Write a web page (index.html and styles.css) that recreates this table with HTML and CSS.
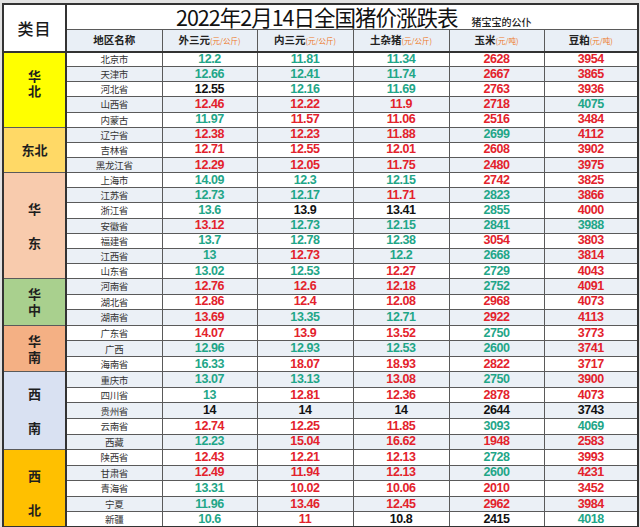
FILE: index.html
```html
<!DOCTYPE html>
<html lang="zh">
<head>
<meta charset="utf-8">
<title>2022年2月14日全国猪价涨跌表</title>
<link rel="stylesheet" href="styles.css">
</head>
<body>
<table class="sheet">
<colgroup>
<col class="c-cat"><col class="c-name"><col class="c-d1"><col class="c-d2"><col class="c-d3"><col class="c-d4"><col class="c-d5">
</colgroup>
<tbody>
<tr class="title-row">
<td class="cat-head" rowspan="2">类目</td>
<td class="title-cell" colspan="6"><div class="title-wrap"><span class="title">2022年2月14日全国猪价涨跌表</span><span class="sub">猪宝宝的公仆</span></div></td>
</tr>
<tr class="head-row">
<th>地区名称</th>
<th>外三元<span class="unit">(元/公斤)</span></th>
<th>内三元<span class="unit">(元/公斤)</span></th>
<th>土杂猪<span class="unit">(元/公斤)</span></th>
<th>玉米<span class="unit">(元/吨)</span></th>
<th>豆粕<span class="unit">(元/吨)</span></th>
</tr>

<tr><td class="cat huabei" rowspan="5"><div class="lbl lbl-up">华<br>北</div></td><td class="nm">北京市</td><td class="g">12.2</td><td class="g">11.81</td><td class="g">11.34</td><td class="r">2628</td><td class="r">3954</td></tr>
<tr class="ev"><td class="nm">天津市</td><td class="g">12.66</td><td class="g">12.41</td><td class="g">11.74</td><td class="r">2667</td><td class="r">3865</td></tr>
<tr><td class="nm">河北省</td><td class="k">12.55</td><td class="g">12.16</td><td class="g">11.69</td><td class="r">2763</td><td class="r">3936</td></tr>
<tr class="ev"><td class="nm">山西省</td><td class="r">12.46</td><td class="r">12.22</td><td class="r">11.9</td><td class="r">2718</td><td class="g">4075</td></tr>
<tr><td class="nm">内蒙古</td><td class="g">11.97</td><td class="r">11.57</td><td class="r">11.06</td><td class="r">2516</td><td class="r">3484</td></tr>

<tr class="ev"><td class="cat dongbei" rowspan="3"><div class="lbl">东北</div></td><td class="nm">辽宁省</td><td class="r">12.38</td><td class="r">12.23</td><td class="r">11.88</td><td class="g">2699</td><td class="r">4112</td></tr>
<tr><td class="nm">吉林省</td><td class="r">12.71</td><td class="r">12.55</td><td class="r">12.01</td><td class="r">2608</td><td class="r">3902</td></tr>
<tr class="ev"><td class="nm">黑龙江省</td><td class="r">12.29</td><td class="r">12.05</td><td class="r">11.75</td><td class="r">2480</td><td class="r">3975</td></tr>

<tr><td class="cat huadong" rowspan="7"><div class="lbl lbl-wide">华<br><br>东</div></td><td class="nm">上海市</td><td class="g">14.09</td><td class="g">12.3</td><td class="g">12.15</td><td class="r">2742</td><td class="r">3825</td></tr>
<tr class="ev"><td class="nm">江苏省</td><td class="g">12.73</td><td class="g">12.17</td><td class="r">11.71</td><td class="g">2823</td><td class="r">3866</td></tr>
<tr><td class="nm">浙江省</td><td class="g">13.6</td><td class="k">13.9</td><td class="k">13.41</td><td class="g">2855</td><td class="r">4000</td></tr>
<tr class="ev"><td class="nm">安徽省</td><td class="r">13.12</td><td class="g">12.73</td><td class="g">12.15</td><td class="g">2841</td><td class="g">3988</td></tr>
<tr><td class="nm">福建省</td><td class="g">13.7</td><td class="g">12.78</td><td class="g">12.38</td><td class="r">3054</td><td class="r">3803</td></tr>
<tr class="ev"><td class="nm">江西省</td><td class="g">13</td><td class="r">12.73</td><td class="g">12.2</td><td class="g">2668</td><td class="r">3814</td></tr>
<tr><td class="nm">山东省</td><td class="g">13.02</td><td class="g">12.53</td><td class="r">12.27</td><td class="g">2729</td><td class="r">4043</td></tr>

<tr class="ev tall"><td class="cat huazhong" rowspan="3"><div class="lbl">华<br>中</div></td><td class="nm">河南省</td><td class="r">12.76</td><td class="r">12.6</td><td class="r">12.18</td><td class="g">2752</td><td class="r">4091</td></tr>
<tr class="tall"><td class="nm">湖北省</td><td class="r">12.86</td><td class="r">12.4</td><td class="r">12.08</td><td class="r">2968</td><td class="r">4073</td></tr>
<tr class="ev tall"><td class="nm">湖南省</td><td class="r">13.69</td><td class="g">13.35</td><td class="g">12.71</td><td class="r">2922</td><td class="r">4113</td></tr>

<tr class="tall"><td class="cat huanan" rowspan="3"><div class="lbl">华<br>南</div></td><td class="nm">广东省</td><td class="r">14.07</td><td class="r">13.9</td><td class="r">13.52</td><td class="g">2750</td><td class="r">3773</td></tr>
<tr class="ev tall"><td class="nm">广西</td><td class="g">12.96</td><td class="g">12.93</td><td class="g">12.53</td><td class="g">2600</td><td class="r">3741</td></tr>
<tr class="tall"><td class="nm">海南省</td><td class="g">16.33</td><td class="r">18.07</td><td class="r">18.93</td><td class="r">2822</td><td class="r">3717</td></tr>

<tr class="ev tall"><td class="cat xinan" rowspan="5"><div class="lbl lbl-wide">西<br><br>南</div></td><td class="nm">重庆市</td><td class="g">13.07</td><td class="g">13.13</td><td class="r">13.08</td><td class="g">2750</td><td class="r">3900</td></tr>
<tr class="tall"><td class="nm">四川省</td><td class="g">13</td><td class="r">12.81</td><td class="r">12.36</td><td class="r">2878</td><td class="r">4073</td></tr>
<tr class="ev tall"><td class="nm">贵州省</td><td class="k">14</td><td class="k">14</td><td class="k">14</td><td class="k">2644</td><td class="k">3743</td></tr>
<tr class="tall"><td class="nm">云南省</td><td class="r">12.74</td><td class="r">12.25</td><td class="r">11.85</td><td class="g">3093</td><td class="g">4069</td></tr>
<tr class="ev tall"><td class="nm">西藏</td><td class="g">12.23</td><td class="r">15.04</td><td class="r">16.62</td><td class="r">1948</td><td class="r">2583</td></tr>

<tr class="tall"><td class="cat xibei" rowspan="5"><div class="lbl lbl-wide lbl-down">西<br><br>北</div></td><td class="nm">陕西省</td><td class="r">12.43</td><td class="r">12.21</td><td class="r">12.13</td><td class="g">2728</td><td class="r">3993</td></tr>
<tr class="ev tall"><td class="nm">甘肃省</td><td class="r">12.49</td><td class="r">11.94</td><td class="r">12.13</td><td class="g">2600</td><td class="r">4231</td></tr>
<tr class="tall"><td class="nm">青海省</td><td class="g">13.31</td><td class="r">10.02</td><td class="r">10.06</td><td class="r">2010</td><td class="r">3452</td></tr>
<tr class="ev tall"><td class="nm">宁夏</td><td class="g">11.96</td><td class="r">13.46</td><td class="r">12.45</td><td class="r">2962</td><td class="r">3984</td></tr>
<tr class="tall"><td class="nm">新疆</td><td class="g">10.6</td><td class="r">11</td><td class="k">10.8</td><td class="k">2415</td><td class="g">4018</td></tr>
</tbody>
</table>
</body>
</html>
```

FILE: styles.css
```css
html, body {
  margin: 0;
  padding: 0;
}
body {
  background: #e2e2e2;
  padding: 3px 0 0 2px;
  width: 640px;
  height: 527px;
  box-sizing: border-box;
  overflow: hidden;
  font-family: "Noto Sans CJK SC", "Noto Sans", sans-serif;
}
.sheet {
  border-collapse: collapse;
  table-layout: fixed;
  width: 635px;
  background: #ffffff;
  border: 2px solid #333333;
}
.c-cat { width: 63px; }
.c-name { width: 96px; }
.c-d1 { width: 95px; }
.c-d2 { width: 96px; }
.c-d3 { width: 96px; }
.c-d4 { width: 95px; }
.c-d5 { width: 94px; }

.sheet td, .sheet th {
  border: 1px solid #5a5a5a;
  padding: 0;
  text-align: center;
  vertical-align: middle;
  overflow: hidden;
  white-space: nowrap;
}

.sheet tr.title-row { height: 25px; }
.sheet td.cat-head {
  font-family: "Noto Sans CJK SC", sans-serif;
  font-size: 16px;
  font-weight: 500;
  line-height: 20px;
  letter-spacing: 1px;
  color: #1a1a1a;
  border-right: 2px solid #333333;
  border-bottom: 2px solid #333333;
  background: #ffffff;
}
.sheet td.title-cell {
  text-align: left;
  font-weight: 400;
  overflow: visible;
}
.title-wrap {
  display: flex;
  align-items: baseline;
  padding-left: 109px;
  height: 24px;
}
.title {
  font-family: "Noto Sans CJK SC", sans-serif;
  font-size: 21.5px;
  font-weight: 400;
  line-height: 24px;
  letter-spacing: -1px;
  color: #111111;
}
.sub {
  font-family: "Noto Sans CJK SC", sans-serif;
  font-size: 10px;
  font-weight: 500;
  line-height: 12px;
  margin-left: 14px;
  color: #222222;
  letter-spacing: 0;
}

.sheet tr.head-row { height: 22px; background: #e9eff6; }
.head-row th {
  font-size: 10.5px;
  font-weight: 700;
  color: #222222;
  line-height: 14px;
  border-bottom: 2px solid #333333;
}
.unit {
  font-size: 7.5px;
  font-weight: 400;
  color: #ee7a2a;
}

.sheet tr { height: 15.15px; }
.sheet tr.tall { height: 15.55px; }
.sheet tr.ev td { background: #ebf0f6; }

.sheet td {
  font-family: "Liberation Sans", Arial, sans-serif;
  font-size: 12.5px;
  font-weight: 700;
  line-height: 13px;
  letter-spacing: -0.4px;
}
.sheet td.nm {
  font-family: "Noto Sans CJK SC", sans-serif;
  font-size: 9.5px;
  font-weight: 400;
  line-height: 12px;
  color: #333333;
  letter-spacing: -0.3px;
}
.g { color: #1fa688; }
.r { color: #e3222c; }
.k { color: #111111; }

.sheet td.cat {
  font-family: "Noto Sans CJK SC", sans-serif;
  font-size: 13px;
  font-weight: 700;
  color: #1e1e1e;
  letter-spacing: 0;
  border-right: 2px solid #333333;
  border-bottom: 1px solid #5a5a5a;
}
.lbl { line-height: 15.5px; }
.lbl-wide { line-height: 17px; }
.lbl-up { padding-bottom: 13px; }
.lbl-down { padding-top: 8px; }

.sheet tr td.huabei { background: #ffff00; }
.sheet tr td.dongbei { background: #ffd966; }
.sheet tr td.huadong { background: #f8cbad; }
.sheet tr td.huazhong { background: #a9d08e; }
.sheet tr td.huanan { background: #f4b084; }
.sheet tr td.xinan { background: #d9e1f2; }
.sheet tr td.xibei { background: #ffc000; }
```
